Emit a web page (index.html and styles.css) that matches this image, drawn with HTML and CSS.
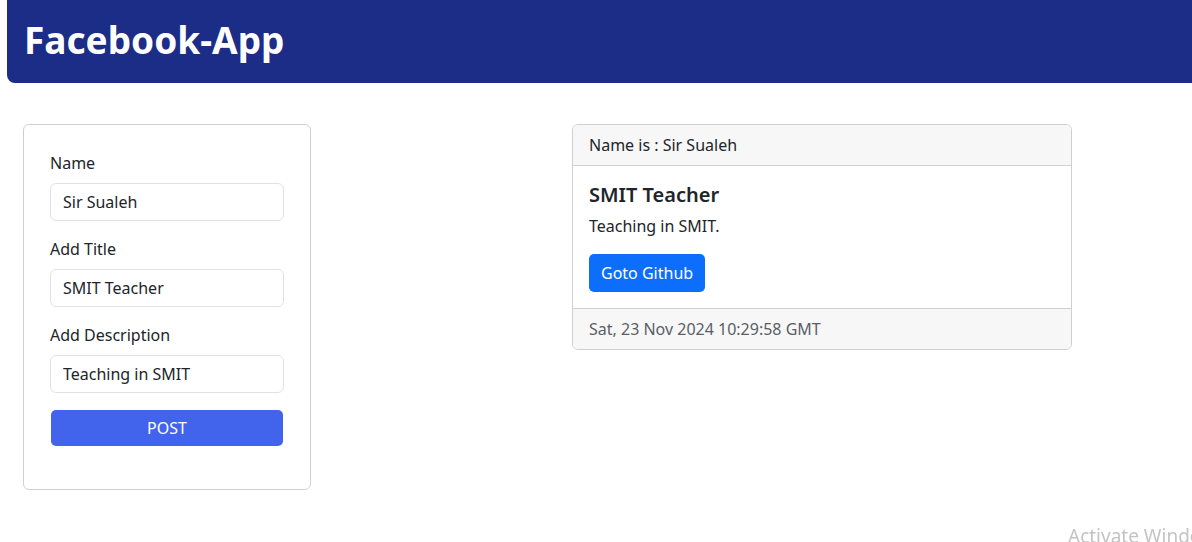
FILE: index.html
```html
<html>
<head>
    <meta charset="UTF-8">
    <title>Facebook-App</title>
    <link rel="stylesheet" href="styles.css">
</head>
<body>
    <div class="navbar">
        <h1 class="brand">Facebook-App</h1>
    </div>

    <div class="main">
        <!-- Post form -->
        <div class="form-card">
            <div class="form-group">
                <label for="name">Name</label>
                <input id="name" type="text" value="Sir Sualeh">
            </div>
            <div class="form-group">
                <label for="title">Add Title</label>
                <input id="title" type="text" value="SMIT Teacher">
            </div>
            <div class="form-group">
                <label for="desc">Add Description</label>
                <input id="desc" type="text" value="Teaching in SMIT">
            </div>
            <button class="post" type="button">POST</button>
        </div>

        <!-- Posted card -->
        <div class="post-card">
            <div class="card-header">Name is : Sir Sualeh</div>
            <div class="card-body">
                <h5 class="card-title">SMIT Teacher</h5>
                <p class="card-text">Teaching in SMIT.</p>
                <a class="btn-github" href="#">Goto Github</a>
            </div>
            <div class="card-footer">Sat, 23 Nov 2024 10:29:58 GMT</div>
        </div>
    </div>

    <div class="watermark">Activate Windows</div>
</body>
</html>
```

FILE: styles.css
```css
body {
    font-family: 'Noto Sans', 'Open Sans', sans-serif;
    font-size: 16px;
    color: #212529;
    background-color: #fff;
    margin: 0;
    padding: 0;
    overflow: hidden;
}

.navbar {
    background-color: #1b2d87;
    margin-left: 7px;
    height: 83px;
    border-bottom-left-radius: 8px;
    padding-left: 17px;
    display: flex;
    align-items: center;
}

.brand {
    margin: 0;
    color: #fff;
    font-size: 37px;
    font-weight: 700;
    line-height: 1;
    padding-bottom: 4px;
}

.main {
    display: flex;
    align-items: flex-start;
    padding: 41px 0 0 23px;
}

.form-card {
    width: 288px;
    box-sizing: border-box;
    border: 1px solid #d0d0d0;
    border-radius: 6px;
    padding: 26px;
}

.form-group {
    margin-bottom: 16px;
}

label {
    display: block;
    line-height: 24px;
    margin-bottom: 8px;
}

input {
    display: block;
    width: 100%;
    box-sizing: border-box;
    height: 38px;
    padding: 6px 12px;
    border: 1px solid #dee2e6;
    border-radius: 6px;
    font-family: inherit;
    font-size: 16px;
    color: #212529;
}

button.post {
    display: block;
    width: 232px;
    height: 36px;
    margin: 17px 0 17px 1px;
    border: none;
    border-radius: 5px;
    background-color: #4263eb;
    color: #fff;
    font-family: inherit;
    font-size: 16px;
    cursor: pointer;
}

.post-card {
    width: 500px;
    box-sizing: border-box;
    margin-left: 261px;
    border: 1px solid #d0d0d0;
    border-radius: 6px;
    overflow: hidden;
}

.card-header {
    background-color: #f7f7f7;
    padding: 8px 16px;
    line-height: 24px;
    border-bottom: 1px solid #d0d0d0;
}

.card-body {
    padding: 16px;
}

.card-title {
    margin: 0 0 8px;
    font-size: 20px;
    font-weight: 600;
    line-height: 24px;
    padding-top: 1px;
    margin-bottom: 7px;
}

.card-text {
    margin: 0 0 16px;
    line-height: 24px;
}

.btn-github {
    display: inline-block;
    background-color: #0d6efd;
    color: #fff;
    text-decoration: none;
    padding: 7px 12px;
    line-height: 24px;
    border-radius: 5px;
}

.card-footer {
    background-color: #f7f7f7;
    padding: 8px 16px;
    line-height: 24px;
    border-top: 1px solid #d0d0d0;
    color: #595f66;
}

.watermark {
    position: fixed;
    left: 1068px;
    top: 523px;
    font-size: 19px;
    color: #c4c4c4;
    white-space: nowrap;
}
```
